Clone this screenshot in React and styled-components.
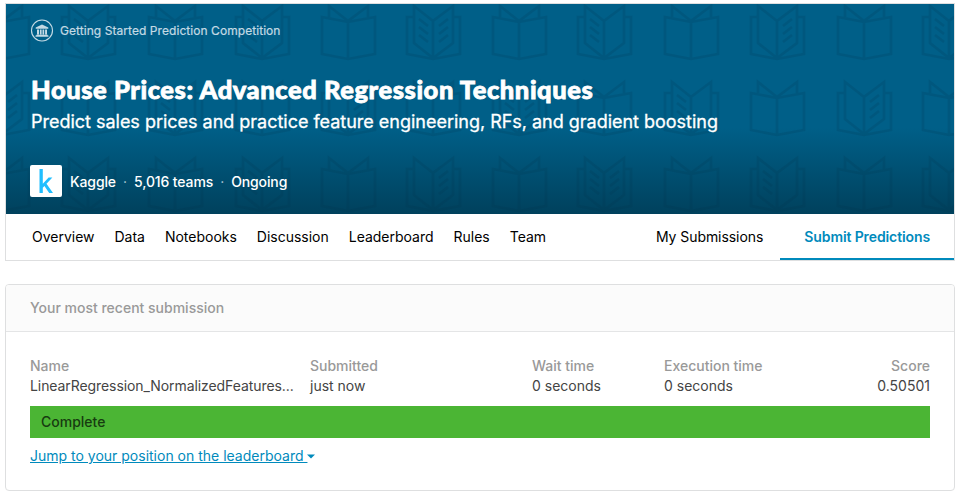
import React from 'react';
import styled, { createGlobalStyle } from 'styled-components';

const Global = createGlobalStyle`
  * { box-sizing: border-box; }
  body { margin: 0; background: #fff; font-family: Inter, "Liberation Sans", sans-serif; font-size: 14px; color: #000; }
`;

const Page = styled.main`
  width: 959px; height: 496px; padding: 3px 4px 0 5px; overflow: hidden;
`;
const Competition = styled.section`
  width: 950px; height: 258px; border: 1px solid #dedfe0;
`;
const Banner = styled.header`
  position: relative; height: 210px; padding: 15px 24px 0; color: #fff;
  background: linear-gradient(to bottom, #005f88 0, #005f88 124px, #00415d 210px);
  overflow: hidden;
`;
const Pattern = styled.svg`
  position: absolute; left: 0; top: 0; width: 948px; height: 210px;
`;
const Category = styled.div`
  position: relative; display: flex; align-items: center; height: 23px; color: #c4dae4;
`;
const CategoryIcon = styled.svg`
  width: 24px; height: 24px; margin-right: 6px; flex: none;
`;
const CategoryName = styled.span`
  font-size: 12px; letter-spacing: 0.06px; white-space: nowrap; -webkit-text-stroke: 0.2px currentColor;
`;
const Title = styled.h1`
  position: relative; margin: 32px 0 0; padding-left: 1px; height: 30px; line-height: 30px;
  font-family: Lato, sans-serif; font-weight: 900; font-size: 25.5px; letter-spacing: 0.57px;
  -webkit-text-stroke: 0.8px currentColor; white-space: nowrap;
`;
const Subtitle = styled.p`
  position: relative; margin: 4px 0 0; padding-left: 1px; height: 28px; line-height: 28px; font-size: 18px;
  letter-spacing: -0.015px; -webkit-text-stroke: 0.3px currentColor; white-space: nowrap;
`;
const Host = styled.div`
  position: relative; display: flex; align-items: center; margin-top: 29px; height: 32px;
  font-size: 14px; font-weight: 500; letter-spacing: -0.12px; white-space: nowrap;
`;
const Logo = styled.svg`
  width: 32px; height: 32px; margin-right: 8px; flex: none;
`;
const Dot = styled.span`
  width: 18px; text-align: center; font-weight: 400; color: #b3cbd6;
`;
const Tabs = styled.nav`
  display: flex; height: 46px; padding-left: 26px; line-height: 46px; white-space: nowrap;
`;
const Tab = styled.a`
  margin-right: 20px; font-size: 14px; letter-spacing: -0.01px;
`;
const Actions = styled.div`
  display: flex; margin-left: auto;
`;
const Action = styled.a`
  padding: 0 ${p => (p.$active ? '24px' : '17px')} 0 24px;
  font-weight: ${p => (p.$active ? 600 : 400)};
  letter-spacing: ${p => (p.$active ? '-0.11px' : '-0.06px')};
  color: ${p => (p.$active ? '#008abc' : '#000')};
  border-bottom: ${p => (p.$active ? '2px solid #008abc' : '0')};
`;
const Card = styled.section`
  width: 950px; height: 207px; margin-top: 23px; border: 1px solid #dedfe0; border-radius: 4px; overflow: hidden;
`;
const CardTitle = styled.h2`
  margin: 0; height: 47px; padding-left: 24px; line-height: 46px; background: #fbfbfb;
  border-bottom: 1px solid #e4e5e6; font-size: 14px; font-weight: 500; color: #999;
`;
const CardBody = styled.div`
  padding: 24px;
`;
const Fields = styled.dl`
  display: grid; grid-template-columns: 280px 222px 132px 1fr 60px; margin: 0; height: 50px;
`;
const Field = styled.div`
  text-align: ${p => (p.$end ? 'right' : 'left')}; line-height: 20px; white-space: nowrap;
`;
const Label = styled.dt`
  color: #999; font-weight: 500;
`;
const Value = styled.dd`
  margin: 0; color: #444; letter-spacing: ${p => (p.$tight ? '-0.08px' : '0')};
`;
const Status = styled.div`
  height: 32px; padding-left: 11px; line-height: 32px; background: #4bb534; color: #173b10; font-weight: 500;
`;
const Jump = styled.a`
  display: flex; align-items: center; margin-top: 8px; height: 20px; color: #008abc; white-space: pre;
`;
const JumpText = styled.span`
  line-height: 20px; text-decoration: underline;
`;
const Caret = styled.svg`
  width: 8px; height: 5px;
`;

const columns = [-31, 55, 142, 229, 315, 400, 486, 571, 658, 744, 831, 916];
const rows = [
  { y: 0, kinds: 'clclcbclcrcb' },
  { y: 76, kinds: 'rclcrcbclcrc' },
  { y: 152, kinds: 'clclcrcbclcr' },
];

function Book({ x, y, kind }) {
  const closed = kind === 'c';
  return (
    <g transform={`translate(${x} ${y})`}>
      {closed ? (
        <path d="M1 13 27 18 54 13V50L27 55 1 50ZM27 18V55M8 13V2L27 17 47 2V13" />
      ) : (
        <path d="M8 13H1V50L27 55 54 50V13H47M27 17 8 2V39L27 54 47 39V2L27 17V54" />
      )}
      {(kind === 'l' || kind === 'b') && <path d="M13 15 22 22M13 23 22 30M13 31 22 38" />}
      {(kind === 'r' || kind === 'b') && <path d="M33 22 42 15M33 30 42 23M33 38 42 31" />}
    </g>
  );
}

const tabs = ['Overview', 'Data', 'Notebooks', 'Discussion', 'Leaderboard', 'Rules', 'Team'];
const fields = [
  ['Name', 'LinearRegression_NormalizedFeatures...'],
  ['Submitted', 'just now'],
  ['Wait time', '0 seconds'],
  ['Execution time', '0 seconds'],
  ['Score', '0.50501'],
];

export default function App() {
  return (
    <>
      <Global />
      <Page>
        <Competition>
          <Banner>
            <Pattern viewBox="0 0 948 210" fill="none" stroke="#002f4b" strokeOpacity=".16" strokeWidth="2.6">
              {rows.map(row => columns.map((x, i) => (
                <Book key={`${row.y}-${x}`} x={x} y={row.y} kind={row.kinds[i]} />
              )))}
            </Pattern>
            <Category>
              <CategoryIcon viewBox="0 0 24 24">
                <circle cx="12" cy="11.5" r="10.5" fill="none" stroke="currentColor" strokeWidth="1.1" />
                <path fill="currentColor" d="M12 5.5 18.3 8.6V9.7H5.7V8.6ZM7 10.5H9V15.5H7ZM9.9 10.5H11.6V15.5H9.9ZM12.5 10.5H14.2V15.5H12.5ZM15.1 10.5H17V15.5H15.1ZM6.3 15.8H17.7V16.6H18.5V17.8H5.5V16.6H6.3Z" />
              </CategoryIcon>
              <CategoryName>Getting Started Prediction Competition</CategoryName>
            </Category>
            <Title>House Prices: Advanced Regression Techniques</Title>
            <Subtitle>Predict sales prices and practice feature engineering, RFs, and gradient boosting</Subtitle>
            <Host>
              <Logo viewBox="0 0 32 32">
                <rect width="32" height="32" rx="2" fill="#fff" />
                <path fill="#20beff" d="M9.5 4H12.8V18.8L18.6 12.5H22.4L16.5 18.8 23 28H19.2L14.4 21 12.8 22.7V28H9.5Z" />
              </Logo>
              <span>Kaggle</span><Dot>·</Dot><span>5,016 teams</span><Dot>·</Dot><span>Ongoing</span>
            </Host>
          </Banner>
          <Tabs>
            {tabs.map(t => <Tab key={t}>{t}</Tab>)}
            <Actions>
              <Action>My Submissions</Action>
              <Action $active>Submit Predictions</Action>
            </Actions>
          </Tabs>
        </Competition>
        <Card>
          <CardTitle>Your most recent submission</CardTitle>
          <CardBody>
            <Fields>
              {fields.map(([label, value]) => (
                <Field key={label} $end={label === 'Score'}>
                  <Label>{label}</Label>
                  <Value $tight={label === 'Name'}>{value}</Value>
                </Field>
              ))}
            </Fields>
            <Status>Complete</Status>
            <Jump>
              <JumpText>{'Jump to your position on the leaderboard '}</JumpText>
              <Caret viewBox="0 0 8 5"><path d="M0 .5H8L4 4.5Z" fill="currentColor" /></Caret>
            </Jump>
          </CardBody>
        </Card>
      </Page>
    </>
  );
}
